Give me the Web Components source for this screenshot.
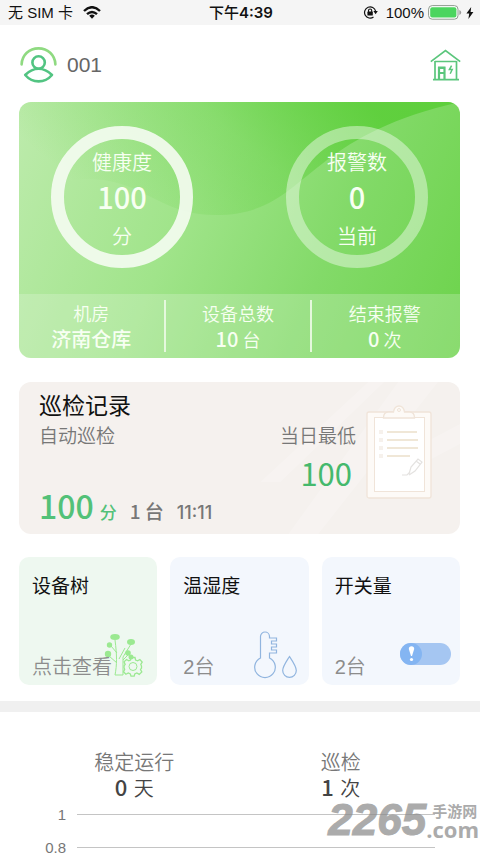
<!DOCTYPE html>
<html lang="zh-CN">
<head>
<meta charset="utf-8">
<meta name="viewport" content="width=device-width, initial-scale=1">
<title>巡检</title>
<style>
html{height:100%}
body{margin:0;min-height:100%;background:#fff;overflow:hidden;font-family:"Noto Sans CJK SC",sans-serif;color:#111}
</style>
</head>
<body>
<monitor-app></monitor-app>
<script>
function define(name, html) {
  const t = document.createElement('template');
  t.innerHTML = html;
  customElements.define(name, class extends HTMLElement {
    constructor() {
      super();
      this.attachShadow({mode: 'open'}).append(t.content.cloneNode(true));
    }
  });
}

define('status-bar', `
<style>
:host{display:grid;grid-template-columns:1fr auto 1fr;align-items:center;height:25px;padding:0 6px 0 8px;background:#f5f5f5;color:#111;font:15px/25px "Liberation Sans","Noto Sans CJK SC",sans-serif}
div{display:flex;align-items:center}
.l{gap:10px}.r{justify-content:flex-end;gap:4px}
time{font-weight:500;font-family:Inter,"Noto Sans CJK SC",sans-serif}
time b{font-weight:600}
.lock{margin-right:4px}
svg{display:block}
</style>
<div class="l"><span>无 SIM 卡</span>
<svg width="18" height="13" viewBox="0 0 18 13"><g fill="none" stroke="#111" stroke-width="2.4"><path d="M1 5Q9-2.6 17 5"/><path d="M4 8.2q5-4.6 10 0"/></g><path d="M6.2 9.8q2.8-2.4 5.6 0L9 12.8z" fill="#111"/></svg></div>
<time>下午<b>4:39</b></time>
<div class="r">
<svg class="lock" width="15" height="13" viewBox="0 0 15 13"><path d="M12.6 5.2A5.6 5.6 0 1 0 10.5 11" fill="none" stroke="#111" stroke-width="1.2"/><path d="M10.4 5h4.4l-2.2 3.2z" fill="#111"/><rect x="4.4" y="5.6" width="5.4" height="4" rx=".6" fill="#111"/><path d="M5.5 6V4.6a1.6 1.6 0 0 1 3.2 0V6" fill="none" stroke="#111" stroke-width="1.1"/></svg>
<span>100%</span>
<svg width="34" height="15" viewBox="0 0 34 15"><rect x=".6" y=".6" width="29.4" height="13.6" rx="3.6" fill="#fff" stroke="#8e9a8e" stroke-width="1"/><rect x="2.2" y="2.2" width="26.2" height="10.4" rx="2" fill="#4cd55f"/><path d="M31.4 5v5q1.8-.6 1.8-2.5T31.4 5z" fill="#9a9a9a"/></svg>
<svg width="8" height="12" viewBox="0 0 8 12"><path d="M5.2 0 .4 6.6h2.8L2.4 12l5-6.9H4.6z" fill="#111"/></svg>
</div>`);

define('app-header', `
<style>
:host{display:flex;justify-content:space-between;align-items:center;box-sizing:border-box;height:77px;padding:2px 19px 0 20px}
button{display:flex;align-items:center;gap:10px;padding:0;border:0;background:none;color:#666;font:21px/30px "Liberation Sans","Noto Sans CJK SC",sans-serif}
svg{display:block}
</style>
<button aria-label="用户 001">
<svg width="37" height="36" viewBox="0 0 37 36" fill="none" stroke-width="2.6" stroke-linecap="round"><path d="M1.6 17.4C2 7.8 9.4 1.4 18.5 1.4S35 7.800 35.400 17.400" stroke="#8fda81"/><circle cx="18.600" cy="15.500" r="6.200" stroke="#52c482"/><path d="M5.200 28Q11.500 21.800 18.600 21.800T32 28Q26.500 34.400 18.600 34.400T5.200 28z" stroke="#52c482" stroke-linejoin="round"/></svg>
<span>001</span></button>
<button aria-label="机房">
<svg width="31" height="32" viewBox="0 0 31 32" fill="none" stroke="#5bc67c" stroke-width="1.700"><path d="M.8 12.600 15.500 1.600 30.200 12.600"/><path d="M5 12v18M26.500 12v18M5 12.500h21.500M3 30.600h26"/><path d="M9 30V19h5.500v11M8 18.500h7.500M9.500 24h5" stroke-width="2.200"/><path d="m21.600 16.600-2.200 4h2.800l-2 4.200" stroke-width="1.500"/></svg>
</button>`);

define('ring-gauge', `
<style>
:host{display:flex;flex-direction:column;align-items:center;box-sizing:border-box;width:142px;height:142px;padding-top:9px;border:13px solid var(--ring);border-radius:50%;color:#f7fff2;font-size:20px;line-height:28px;font-weight:350}
b{font-size:29px;line-height:40px;font-weight:500}
i{font-style:normal;line-height:40px}
</style>
<slot name="label"></slot><b><slot></slot></b><i><slot name="unit"></slot></i>`);

define('stat-cell', `
<style>
:host{display:flex;flex-direction:column;align-items:center;flex:1;font-size:18px;line-height:26px;font-weight:350;color:#f7fff2}
:host(:not(:last-of-type)){border-right:2px solid #e5f8dd}
::slotted(b){font-size:20px;font-weight:500}
</style>
<slot name="label"></slot><div><slot></slot></div>`);

define('health-card', `
<style>
:host{display:block;position:relative;overflow:hidden;border-radius:12px;background:linear-gradient(112deg,#bdebac 0%,#a0e48a 38%,#83da69 68%,#6cd34b 100%)}
.wave{position:absolute;inset:0;width:100%;height:100%}
.rings{position:relative;display:flex;justify-content:space-between;padding:24px 32px 26px}
.stats{position:relative;display:flex;padding:6px 3px 6px 0;background:rgba(255,255,255,.2)}
</style>
<svg class="wave" viewBox="0 0 442 256" preserveAspectRatio="none"><defs><linearGradient id="w" x1="0" y1=".3" x2="1" y2="0"><stop stop-color="#54cc30" stop-opacity="0"/><stop offset=".45" stop-color="#54cc30" stop-opacity=".32"/><stop offset=".8" stop-color="#54cc30" stop-opacity=".75"/></linearGradient></defs><path d="M0 112C28 80 60 72 95 80S150 113 197 113C290 113 280 36 442 0H0z" fill="url(#w)"/></svg>
<div class="rings">
<ring-gauge style="--ring:rgba(245,252,242,.9)"><span slot="label">健康度</span>100<span slot="unit">分</span></ring-gauge>
<ring-gauge style="--ring:rgba(255,255,255,.42)"><span slot="label">报警数</span>0<span slot="unit">当前</span></ring-gauge>
</div>
<div class="stats">
<stat-cell><span slot="label">机房</span><b>济南仓库</b></stat-cell>
<stat-cell><span slot="label">设备总数</span><b>10</b> 台</stat-cell>
<stat-cell><span slot="label">结束报警</span><b>0</b> 次</stat-cell>
</div>`);

define('record-card', `
<style>
:host{display:flex;position:relative;overflow:hidden;justify-content:space-between;border-radius:12px;background:#f5f1ee;padding:5px 28px 9px 20px;color:#777}
.bg{position:absolute;inset:0;width:100%;height:100%}
.left,.right{position:relative}
h2{margin:0;font-size:23px;line-height:34px;font-weight:400;color:#111}
p{margin:0;font-size:19px;line-height:28px;font-weight:350}
.sum{display:flex;align-items:baseline;margin-top:36px;line-height:20px;font-size:19px;font-weight:500}
.sum b{font-size:32px;line-height:40px;font-weight:500;color:#53c178}
.sum i{font-style:normal;font-size:17px;color:#53c178;margin:0 13px 0 6px}
.sum time{margin-left:13px;font-family:Inter,sans-serif;font-size:18px}
.right{display:flex;gap:10px}
.low{padding-top:34px;text-align:right}
.low output{display:block;font-size:31px;line-height:48px;font-weight:400;color:#45b96d;padding-right:4px}
.clip{margin-top:17px}
</style>
<svg class="bg" viewBox="0 0 442 152" preserveAspectRatio="none"><path d="M350 0h16L262 100h-20zM380 0h40L300 152h-30zM442 42v20l-80 42V84z" fill="#fff" opacity=".2"/></svg>
<div class="left"><h2>巡检记录</h2><p>自动巡检</p>
<div class="sum"><b>100</b><i>分</i><span>1 台</span><time>11:11</time></div></div>
<div class="right"><div class="low"><p>当日最低</p><output>100</output></div>
<svg class="clip" width="66" height="96" viewBox="0 0 66 96" fill="none" stroke="#f0e4d9"><rect x="1" y="8" width="64" height="86" rx="2" fill="#fdfaf7" stroke-width="1.300"/><rect x="8.500" y="13.500" width="50" height="74" fill="#fff"/><path d="M17.500 14q0-6 5-6h5q1-6 5.500-6t5.500 6h5q5 0 5 6z" fill="#fdfaf7" stroke-width="1.300"/><circle cx="33" cy="6" r="1.500"/><path d="M21 28h30M21 36h31M21 44h31M21 52h23" stroke="#f0e7d7" stroke-width="1.800"/><path d="M13 28h4M13 36h4M13 44h4M13 52h4" stroke="#f6f1ec" stroke-width="4"/><path d="m43 70 2-7 7-8 4 3-7 9-6 4M36 71h5l3-3M50 57l4 3" stroke="#e4e2e0" stroke-width="1.200"/></svg></div>`);

define('device-tile', `
<style>
:host{display:block;flex:1}
button{position:relative;display:flex;flex-direction:column;justify-content:space-between;align-items:flex-start;box-sizing:border-box;width:100%;height:128px;padding:14px 13px 3px;border:0;border-radius:10px;background:var(--tile,#f3f7fd);font:19px/28px "Noto Sans CJK SC",sans-serif;color:#111;text-align:left}
small{position:relative;font:350 20px/30px "Liberation Sans","Noto Sans CJK SC",sans-serif;color:#8c8c8c}
::slotted(svg){position:absolute;right:var(--icon-right,12px);bottom:var(--icon-bottom,6px)}
</style>
<button><slot name="icon"></slot><span><slot></slot></span><small><slot name="note"></slot></small></button>`);

define('metric-value', `
<style>
:host{display:flex;flex-direction:column;align-items:center;flex:1;font-size:20px;line-height:28px;font-weight:350;color:#777}
div{height:22px;line-height:22px;color:#444}
::slotted(b){font-size:22px;line-height:20px;font-weight:500;margin-right:2px}
</style>
<slot name="label"></slot><div><slot></slot></div>`);

define('chart-line', `
<style>
:host{display:flex;align-items:center;gap:11px;height:33px;font:15px/20px "Liberation Sans",sans-serif;color:#777}
span{width:36px;text-align:right}
hr{flex:1;margin:0;border:0;border-top:1px solid #c4c4c4}
</style>
<span><slot></slot></span><hr>`);

define('site-mark', `
<style>
:host{display:flex;align-items:center;color:#8b8b8b;opacity:.72;font-family:"Noto Sans CJK SC",sans-serif}
b{font:italic 700 44px/44px "Liberation Sans",sans-serif;-webkit-text-stroke:1px #8b8b8b}
div{display:flex;flex-direction:column;font-size:15px;line-height:18px;font-weight:700}
div span:first-child{padding-left:6px}
div span:last-child{font:700 22px/18px "Open Sans",sans-serif}
</style>
<b>2265</b><div><span>手游网</span><span>.com</span></div>`);

define('monitor-app', `
<style>
:host{display:block;position:relative}
main{display:flex;flex-direction:column;gap:24px;padding:0 20px 16px 19px}
.tiles{display:flex;gap:13px;margin-top:-1px}
.trend{border-top:11px solid #f0f0f0}
.metrics{display:flex;padding:36px 36px 0 31px}
.chart{padding:0 45px 0 30px}
site-mark{position:absolute;right:1px;bottom:22px}
</style>
<status-bar></status-bar>
<app-header></app-header>
<main>
<health-card></health-card>
<record-card></record-card>
<div class="tiles">
<device-tile style="--tile:#eef8f0;--icon-right:14px;--icon-bottom:8px">设备树<span slot="note">点击查看</span>
<svg slot="icon" width="40" height="44" viewBox="0 0 40 44"><g fill="#9be991"><ellipse cx="12" cy="4" rx="4.800" ry="3"/><circle cx="6.500" cy="12" r="2.700"/><ellipse cx="28" cy="9" rx="4" ry="3"/><circle cx="5" cy="21" r="3.200"/><circle cx="25" cy="20" r="2.800"/><circle cx="28" cy="24" r="2.500"/></g><g fill="none" stroke="#9be991"><path d="M12 42c2-10 2-20 0-35M20 42V24L28 11M14 20l-6-7M14 30 6 23M20 27l5-5M12 42h8M16 26l6-11"/><circle cx="30" cy="33.500" r="4"/><path d="m28 24.500 4 0 .6 2.600 2 .8 2.300-1.400 2.300 2.500-1.400 2.400.7 1.700v2l-1 1.400 1.300 2.400-2.600 2.500-2.400-1.400-2 .9-.6 2.300H28l-.7-2.300-2-.9-2.400 1.300-2.400-2.500 1.200-2.400-.7-2 .2-1.800 1-1.200-1.200-2.500 2.500-2.400 2.300 1.300 1.700-.7z" stroke-width="1.300"/></g></svg></device-tile>
<device-tile>温湿度<span slot="note">2台</span>
<svg slot="icon" width="44" height="48" viewBox="0 0 44 48" fill="none" stroke="#91b5df" stroke-width="1.200"><path d="M7.500 27V5.500a4.500 4.500 0 0 1 9 0V7h7v3h-5v3h5v3h-5v3h5v3h-7v5a10.300 10.300 0 1 1-9 0z"/><path d="M36.500 25.500c4 6 6.800 10 6.800 14a6.800 6.800 0 0 1-13.600 0c0-4 3-8 6.800-14z"/></svg></device-tile>
<device-tile style="--icon-right:9px;--icon-bottom:20px">开关量<span slot="note">2台</span>
<svg slot="icon" width="51" height="22" viewBox="0 0 51 22"><rect width="51" height="22" rx="11" fill="#a5c6f2"/><circle cx="11" cy="11" r="11" fill="#84b5f2"/><path d="M8.800 6a2.700 2.700 0 0 1 5.400 0L12 13h-1z" fill="#fff"/><circle cx="11.500" cy="16.500" r="1.600" fill="#fff"/></svg></device-tile>
</div>
</main>
<section class="trend">
<div class="metrics">
<metric-value><span slot="label">稳定运行</span><b>0</b> 天</metric-value>
<metric-value><span slot="label">巡检</span><b>1</b> 次</metric-value>
</div>
<div class="chart"><chart-line>1</chart-line><chart-line>0.8</chart-line></div>
</section>
<site-mark></site-mark>`);
</script>
</body>
</html>
